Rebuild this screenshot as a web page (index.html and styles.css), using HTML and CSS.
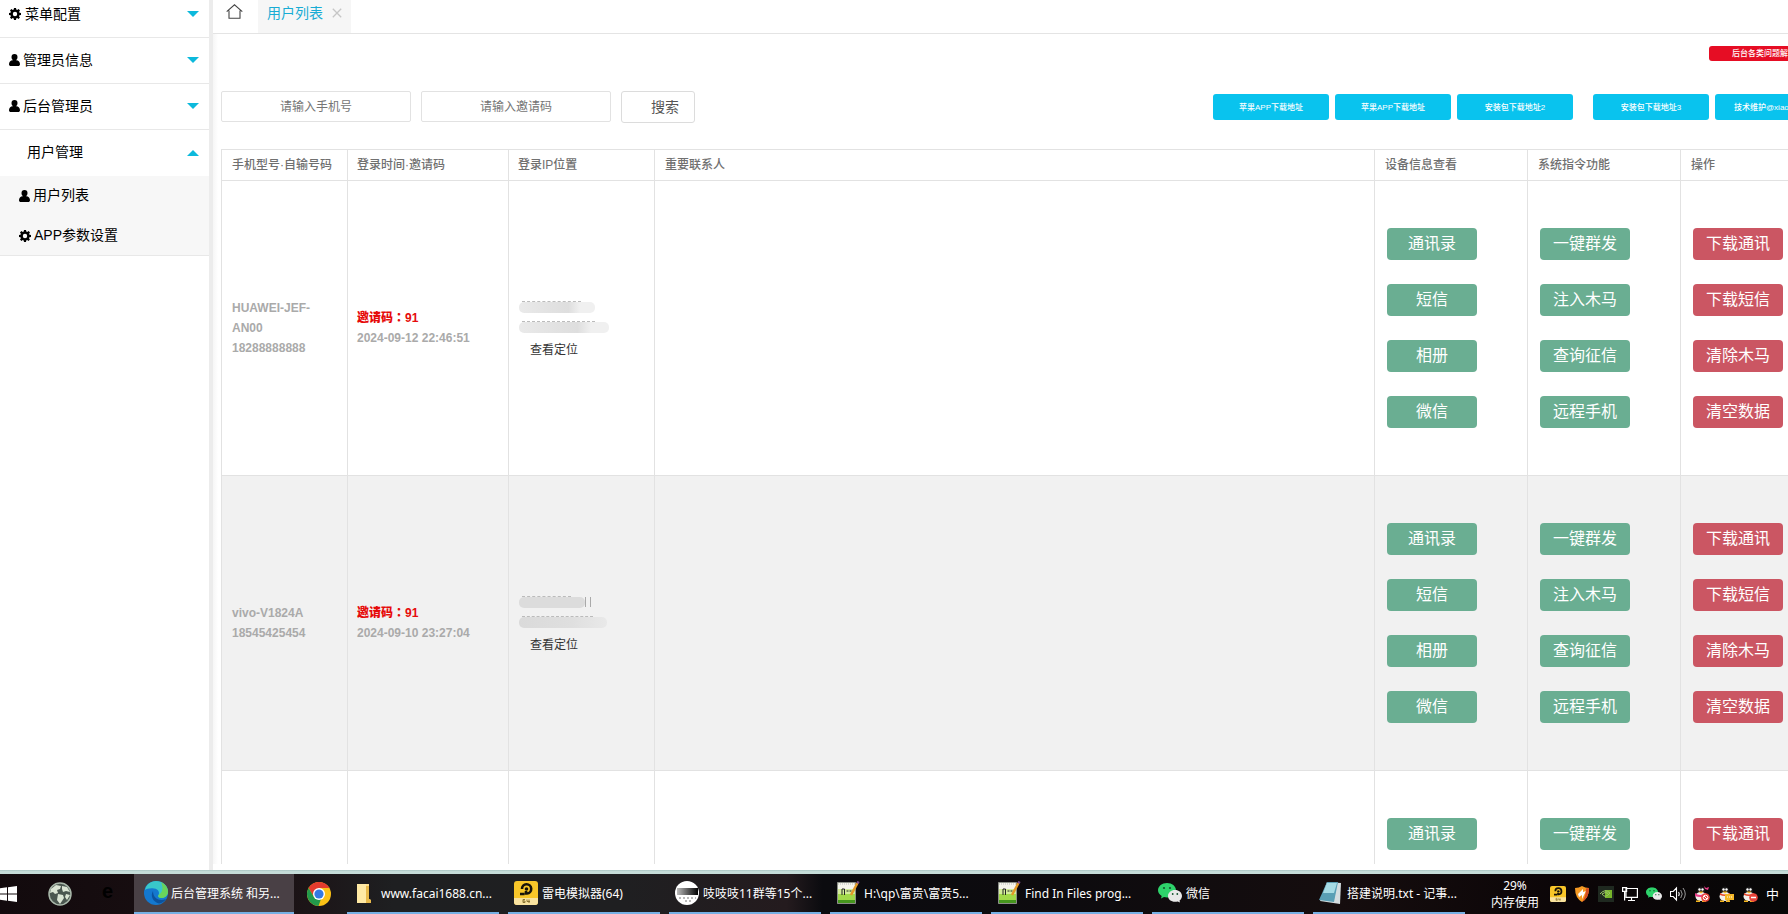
FILE: index.html
```html
<!DOCTYPE html>
<html lang="zh-CN">
<head>
<meta charset="utf-8">
<title>后台管理系统</title>
<link rel="stylesheet" href="styles.css">
</head>
<body>
<svg class="defs" width="0" height="0">
  <symbol id="gear" viewBox="0 0 12 12"><path fill-rule="evenodd" d="M5 0h2l.3 1.6.9.4 1.4-.9 1.4 1.4-.9 1.3.4 1L12 5v2l-1.600.3-.4.9.9 1.400-1.400 1.400-1.300-.9-1 .4L7 12H5l-.3-1.500-1-.4-1.300.9L1 9.600l.9-1.400-.4-.9L0 7V5l1.500-.3.4-1L1 2.400 2.400 1l1.400.9.9-.4zM6 3.800a2.200 2.200 0 1 0 0 4.400 2.200 2.200 0 0 0 0-4.400z"/></symbol>
  <symbol id="user" viewBox="0 0 11 12"><path d="M5.500 0a3 3 0 0 1 3 3.100c0 1.500-.6 2.600-1.400 3.100 2.600 0 3.900 1.700 3.900 4 0 1.100-.8 1.800-1.800 1.800H1.800C.8 12 0 11.300 0 10.200c0-2.300 1.300-4 3.900-4-.8-.5-1.400-1.600-1.400-3.100a3 3 0 0 1 3-3.100z"/></symbol>
  <symbol id="notepp" viewBox="0 0 24 24"><path fill="#f6f6ec" stroke="#8a8f86" d="M1.500 1.500h18v21h-18z"/><path fill="#d3ec9a" d="M2 8h17v6H2z"/><path fill="#a2d94a" d="M2 13h17v9H2z"/><path fill="#45961d" d="M2 19h17v3H2z"/><path stroke="#bbb" stroke-dasharray="1 1" d="M2 3h17"/><path fill="none" stroke="#222" stroke-width="1" d="M6 14V8h2.500v6M10.500 10h2m1 0h2"/><path stroke="#e39a27" stroke-width="2.500" d="M21.500 2 15 14"/><path stroke="#7a4a87" stroke-width="2.500" d="m22.500.5-1 1.800"/></symbol>
  <symbol id="wechat" viewBox="0 0 24 20"><path fill="#2ed36b" d="M9 0c5 0 9 3.200 9 7.300 0 4-4 7.200-9 7.200-1 0-2-.2-3-.5L3 15.500l.7-2.500C1.500 11.700 0 9.600 0 7.300 0 3.200 4 0 9 0z"/><path fill="#e9e9e9" d="M17 7c4 0 7 2.600 7 6 0 1.900-1 3.500-2.500 4.500l.5 2-2.300-1.100c-.9.3-1.800.4-2.700.4-4 0-7-2.500-7-5.800s3-6 7-6z"/><g fill="#17552f"><circle cx="6" cy="5" r="1.100"/><circle cx="12" cy="5" r="1.100"/><circle cx="14.700" cy="11" r=".9"/><circle cx="19.300" cy="11" r=".9"/></g></symbol>
  <symbol id="ld" viewBox="0 0 24 24"><rect width="24" height="24" rx="3" fill="#f8c629"/><path fill="#f9e3a0" d="M0 17h24v4a3 3 0 0 1-3 3H3a3 3 0 0 1-3-3z"/><path fill="none" stroke="#17130a" stroke-width="2.600" d="M12 10v2.500h1a4.600 4.600 0 1 0-5-4.500M6 13h4.500"/><circle cx="12.500" cy="8" r="1.800" fill="#17130a"/><path fill="none" stroke="#8a7433" d="M11 18.500H9v3h2V20H9M13 18.500v2h3m-1-2V22"/></symbol>
  <symbol id="qq" viewBox="0 0 16 16"><ellipse cx="7" cy="5" rx="4" ry="4.500" fill="#181818"/><ellipse cx="7" cy="10.500" rx="5.500" ry="4.500" fill="#f3f0ec"/><circle cx="5.500" cy="3.500" r="1.200" fill="#fff"/><circle cx="8.500" cy="3.500" r="1.200" fill="#fff"/><path fill="#f5b61c" d="M4.500 5.500h5L7 7.500zM2 14.500h4v1.500H2zM8 14.500h4v1.500H8z"/></symbol>
</svg>
<div class="desktop">
  <div class="browser">
    <nav class="sidebar">
      <div class="menu"><svg class="mi"><use href="#gear"/></svg><span>菜单配置</span><i class="caret"></i></div>
      <div class="menu"><svg class="mi u"><use href="#user"/></svg><span>管理员信息</span><i class="caret"></i></div>
      <div class="menu"><svg class="mi u"><use href="#user"/></svg><span>后台管理员</span><i class="caret"></i></div>
      <div class="menu open"><span>用户管理</span><i class="caret up"></i></div>
      <div class="submenu">
        <div class="sub"><svg class="mi u"><use href="#user"/></svg><span>用户列表</span></div>
        <div class="sub"><svg class="mi"><use href="#gear"/></svg><span>APP参数设置</span></div>
      </div>
    </nav>
    <main class="main">
      <div class="tabs">
        <svg class="home" viewBox="0 0 17 15"><path d="M.7 7.600 8.500.8l7.800 6.800M3 6.500v7.800h11V6.500"/></svg>
        <div class="tab"><span>用户列表</span><svg class="close" viewBox="0 0 10 10"><path d="m.8.8 8.400 8.400M9.200.8.800 9.200"/></svg></div>
      </div>
      <div class="notice"><span class="red-btn">后台各类问题解</span></div>
      <div class="toolbar">
        <div class="input">请输入手机号</div>
        <div class="input">请输入邀请码</div>
        <div class="search">搜索</div>
        <div class="links">
          <span class="link">苹果APP下载地址</span>
          <span class="link">苹果APP下载地址</span>
          <span class="link wide">安装包下载地址2</span>
          <span class="link">安装包下载地址3</span>
          <span class="link tech">技术维护@xiao</span>
        </div>
      </div>
      <div class="table">
        <div class="row head">
          <div>手机型号·自输号码</div><div>登录时间·邀请码</div><div>登录IP位置</div><div>重要联系人</div><div>设备信息查看</div><div>系统指令功能</div><div>操作</div>
        </div>
        <div class="row">
          <div class="txt">HUAWEI-JEF-<br>AN00<br>18288888888</div>
          <div class="txt"><b>邀请码<span class="colon" lang="zh-TW">：</span>91</b><br>2024-09-12 22:46:51</div>
          <div class="txt"><span class="mask a"></span><span class="mask b"></span><span class="loc">查看定位</span></div>
          <div></div>
          <div class="acts"><span>通讯录</span><span>短信</span><span>相册</span><span>微信</span></div>
          <div class="acts"><span>一键群发</span><span>注入木马</span><span>查询征信</span><span>远程手机</span></div>
          <div class="acts danger"><span>下载通讯</span><span>下载短信</span><span>清除木马</span><span>清空数据</span></div>
        </div>
        <div class="row even">
          <div class="txt">vivo-V1824A<br>18545425454</div>
          <div class="txt"><b>邀请码<span class="colon" lang="zh-TW">：</span>91</b><br>2024-09-10 23:27:04</div>
          <div class="txt"><span class="mask c"></span><span class="mask d"></span><span class="loc">查看定位</span></div>
          <div></div>
          <div class="acts"><span>通讯录</span><span>短信</span><span>相册</span><span>微信</span></div>
          <div class="acts"><span>一键群发</span><span>注入木马</span><span>查询征信</span><span>远程手机</span></div>
          <div class="acts danger"><span>下载通讯</span><span>下载短信</span><span>清除木马</span><span>清空数据</span></div>
        </div>
        <div class="row last">
          <div></div><div></div><div></div><div></div>
          <div class="acts"><span>通讯录</span></div>
          <div class="acts"><span>一键群发</span></div>
          <div class="acts danger"><span>下载通讯</span></div>
        </div>
      </div>
    </main>
  </div>
  <div class="edge"></div>
  <footer class="taskbar">
    <svg class="win" viewBox="0 0 17 16"><path fill="#fff" d="M0 2.300 7 1.300v6.200H0zM8 1.200 17 0v7.500H8zM0 8.500h7v6.200l-7-1zM8 8.500h9V16l-9-1.200z"/></svg>
    <svg class="globe" viewBox="0 0 24 24"><circle cx="12" cy="12" r="11" fill="#4b5750" stroke="#a9b8aa" stroke-width="1.500"/><path fill="#dbe5d4" d="m3 7 5-4 5 1-1 3-3 1 1 3-3 1-2-2-3 1zm11-3 5 1 3 5-4-1-3 1-1-3zm-4 8 5 1 1 3-4 6-3-4zm8 0 4 1-3 5-2-3z"/></svg>
    <span class="dark-e">e</span>
    <div class="task active"><svg viewBox="0 0 24 24"><circle cx="12" cy="12" r="12" fill="#1478cf"/><path fill="#39c7ca" d="M1 9C2 3.500 6.500 0 12 0c7 0 12 5 12 10.500 0 4-3 6.500-6.500 6.500-3 0-4-1.500-3-3 1.200-1.700.5-6-4.500-6.500C5.500 7 2.500 8 1 9z"/><path fill="#69d45b" d="M17 1.200c4.300 2 7 5.500 7 9.300 0 4-3 6.500-6.500 6.500-3 0-4-1.500-3-3C18 12 20 7 17 1.200z"/><path fill="#0c529d" d="M9 10c-3 5 0 11 6 12.500 3-.3 5.500-2 7-4.500-6 2.500-13 0-13-8z"/></svg><span>后台管理系统 和另...</span></div>
    <svg class="chrome" viewBox="0 0 24 24"><circle cx="12" cy="12" r="12" fill="#fbc116"/><path fill="#e33b2e" d="M1.600 6A12 12 0 0 1 22.400 6H12L7 15z"/><path fill="#229a4b" d="M1.600 6 7 15l7 2-2.500 7A12 12 0 0 1 1.600 6z"/><circle cx="12" cy="12" r="6" fill="#fff"/><circle cx="12" cy="12" r="4.600" fill="#3479e2"/></svg>
    <div class="apps">
      <div class="task"><svg viewBox="0 0 24 24"><path fill="#ffe08c" d="M4 3h12v15l2 1v3H4z"/><path fill="#e8b94a" d="M13 5h3v13l2 1v3h-5z"/><path fill="#fff0b8" d="M4 3h9v19H4z" opacity=".55"/></svg><span>www.facai1688.cn...</span></div>
      <div class="task"><svg viewBox="0 0 24 24"><use href="#ld"/></svg><span>雷电模拟器(64)</span></div>
      <div class="task"><svg viewBox="0 0 24 24"><defs><linearGradient id="g"><stop stop-color="#bbb"/><stop offset="1" stop-color="#000"/></linearGradient></defs><circle cx="12" cy="12" r="12" fill="#fff"/><path fill="url(#g)" d="M2 7h21v7H2z"/><path stroke="#777" stroke-dasharray="2 2" d="M4 17h17M10 20h6"/></svg><span>吱吱吱11群等15个...</span></div>
      <div class="task"><svg viewBox="0 0 24 24"><use href="#notepp"/></svg><span>H:\qp\富贵\富贵5...</span></div>
      <div class="task"><svg viewBox="0 0 24 24"><use href="#notepp"/></svg><span>Find In Files prog...</span></div>
      <div class="task"><svg viewBox="0 -2 24 24"><use href="#wechat" width="24" height="20"/></svg><span>微信</span></div>
      <div class="task"><svg viewBox="0 0 24 24"><path fill="#d4dde0" d="m8 1 14 1-1 21-20-3z"/><path fill="#5a9fb5" d="M8 1h11l-4 20L0 19z"/><path fill="#a6dbe5" d="M8 2h10l-3 10H4z"/></svg><span>搭建说明.txt - 记事...</span></div>
    </div>
    <div class="mem">29%<br>内存使用</div>
    <div class="tray">
      <svg viewBox="0 0 24 24"><use href="#ld"/></svg>
      <svg viewBox="0 0 16 16"><path fill="#f59a23" d="M1 2q4 0 7-2 3 2 7 2 0 10-7 14Q1 12 1 2z"/><path fill="#fff" d="m4 8 5-5v3l3-1-4 8V9l-3 2z"/><path fill="#d64b23" d="M12 2.500 15 2q0 10-7 14 4-5 4-13.500z"/></svg>
      <svg viewBox="0 0 16 16"><path fill="#1f2920" d="M0 0h16v16H0z"/><path fill="#77b52a" d="M7 4h7v8H7z"/><path fill="none" stroke="#9cc46a" d="M2 8q5-6 10-1-5 6-8 1 4-3 6-.5"/></svg>
      <svg viewBox="0 0 16 16"><path fill="none" stroke="#fff" stroke-width="1.200" d="M4 2.500h11.400v8.800H4zM9.500 11v3.500M6 14.500h7M.6 1.600h4v3.800h-4zM2.600 5.500v9"/></svg>
      <svg viewBox="0 -2 24 24"><use href="#wechat" width="24" height="20"/></svg>
      <svg viewBox="0 0 16 16"><path fill="none" stroke="#fff" stroke-width="1.100" d="M.5 5.500h2.700L6.500 2v12L3.200 10.500H.5zM8.500 6q1.400 2 0 4"/><path fill="none" stroke="#999" d="M10.700 4q3 4 0 8M13 2q4.500 6 0 12"/></svg>
      <svg viewBox="0 0 16 16"><use href="#qq"/><path fill="#ea3d87" d="M1 7q5 4 11 0v3q-6 2-11 0zM10 0l2 2 3-1-1 3-3-1z"/><circle cx="11.500" cy="11.500" r="4.300" fill="#e8443a"/><circle cx="11.500" cy="11.500" r="2.300" fill="none" stroke="#fff"/><path stroke="#fff" d="m10 10 3 3"/></svg>
      <svg viewBox="0 0 16 16"><use href="#qq"/><path fill="#e44326" d="M2 7q5 3 10 0v2q-5 2-10 0z"/><path fill="#f5b829" d="M7 8h9v6h-4l-2 2v-2H7z"/><path stroke="#fff" stroke-dasharray="1 1" d="M9 11h5"/></svg>
      <svg viewBox="0 0 16 16"><use href="#qq"/><path fill="#e44326" d="M2 7q5 3 10 0v2q-5 2-10 0z"/><circle cx="11.500" cy="11.500" r="4.300" fill="#e8443a"/><path stroke="#fff" stroke-width="1.500" d="M9 11.500h5"/></svg>
      <span class="ime">中</span>
    </div>
  </footer>
</div>
</body>
</html>
```
FILE: styles.css
```css
* { box-sizing: border-box; }
body { margin: 0; overflow: hidden; background: #fff; font-family: "Liberation Sans", "Noto Sans CJK SC", sans-serif; }
.defs { display: block; height: 0; }
.desktop { width: 1788px; height: 914px; display: flex; flex-direction: column; overflow: hidden; }
.browser { height: 870px; display: flex; overflow: hidden; }

.sidebar { width: 213px; flex: none; border-right: 4px solid #ececec; font-size: 14px; color: #000; }
.menu { height: 46px; display: flex; align-items: center; padding: 0 10px 1px 9px; border-bottom: 1px solid #e8e8e8; }
.menu:first-child { height: 38px; padding-bottom: 9px; }
.menu.open { border: 0; padding-left: 27px; }
.mi { width: 12px; height: 12px; margin-right: 4px; flex: none; }
.mi.u { width: 11px; margin-right: 3px; }
.menu span, .sub span { line-height: 20px; }
.menu:not(:first-child) span, .sub span { padding-bottom: 1px; }
.caret { margin-left: auto; border: 6px solid transparent; border-top-color: #0cb9dc; border-bottom: 0; }
.caret.up { border-bottom: 6px solid #0cb9dc; border-top: 0; }
.submenu { height: 80px; background: #f7f7f7; border-bottom: 1px solid #e8e8e8; }
.sub { height: 40px; display: flex; align-items: center; padding: 0 0 1px 19px; }
.sub .mi { margin-right: 3px; }

.main { flex: 1; min-width: 0; height: 864px; overflow: hidden; padding-left: 8px; background: linear-gradient(90deg, #f6f6f6, #fff 5px); }
.tabs { height: 34px; margin-left: -8px; border-bottom: 1px solid #e4e4e4; display: flex; background: #fff; }
.home { width: 17px; height: 15px; margin: 4px 15px 0 13px; fill: none; stroke: #444; stroke-width: 1.100; }
.tab { width: 93px; background: #f6f6f6; display: flex; align-items: center; padding: 0 9px 7px; font-size: 14px; color: #18acd4; }
.tab span { padding-bottom: 2px; }
.close { width: 10px; height: 10px; margin-left: 9px; stroke: #c6c6c6; stroke-width: 1.300; }
.notice { height: 57px; padding-top: 12px; display: flex; margin-left: 1488px; }
.red-btn { width: 116px; height: 15px; flex: none; padding-left: 23px; border-radius: 3px; background: #e60d24; color: #fff; font-size: 8px; font-weight: 500; line-height: 16px; white-space: nowrap; }
.toolbar { height: 58px; display: flex; align-items: flex-start; gap: 10px; white-space: nowrap; }
.input { width: 190px; height: 31px; flex: none; border: 1px solid #e2e2e2; border-radius: 2px; font-size: 12px; line-height: 30px; text-align: center; color: #757575; }
.search { width: 74px; height: 32px; flex: none; border: 1px solid #dcdcdc; border-radius: 3px; padding-left: 29px; font-size: 14px; line-height: 30px; color: #555; }
.links { display: flex; gap: 6px; margin: 3px 0 0 508px; }
.link { width: 116px; height: 26px; flex: none; border-radius: 3px; background: #09c3ee; color: #fff; font-size: 8px; font-weight: 500; line-height: 28px; text-align: center; }
.link.wide { margin-right: 14px; }
.link.tech { padding-left: 19px; text-align: left; }

.table { width: 1640px; border-top: 1px solid #e2e2e2; font-size: 12px; }
.row { display: grid; grid-template-columns: 126px 161px 146px 720px 153px 153px 181px; height: 295px; border-bottom: 1px solid #e2e2e2; background: #fff; }
.row > div { border-left: 1px solid #e2e2e2; padding-left: 10px; }
.row > div:nth-child(2), .row > div:nth-child(3) { padding-left: 9px; }
.row.head { height: 31px; font-weight: 500; line-height: 30px; color: #707070; }
.row.even { background: #f1f1f1; }
.txt { display: flow-root; align-content: center; line-height: 20px; font-weight: bold; color: #aaa; }
.txt b { color: #e60b0b; }
.colon { font-family: "Noto Sans CJK TC", sans-serif; line-height: 1; }
.loc { display: block; margin-top: -2px; padding-left: 12px; font-weight: normal; color: #333; }
.mask { display: block; height: 11px; margin: 5px 0 9px 1px; border-radius: 5px; background: linear-gradient(90deg, #eaeaea, #e2e2e2 40%, #dedede 65%, #f0f0f0 80%); position: relative; }
.mask::before { content: ""; position: absolute; left: 3px; right: 14px; top: -1px; border-top: 1px dashed #bbb; }
.mask.a { width: 76px; }
.mask.b { width: 90px; }
.mask.c { width: 66px; background: #dcdcdc; }
.mask.c::after { content: ""; position: absolute; left: 66px; top: 0; width: 4px; height: 10px; border: solid #aaa; border-width: 0 1px; }
.mask.d { width: 88px; background: linear-gradient(90deg, #dadada, #dfdfdf 60%, #e9e9e9); }
.mask.a, .mask.c { margin-top: 6px; }
.row > .acts { display: flex; flex-direction: column; gap: 24px; padding: 47px 0 0 12px; }
.acts span { width: 90px; height: 32px; border-radius: 4px; background: #6aae92; color: #fff; font-size: 16px; line-height: 31px; text-align: center; }
.acts.danger span { background: #cb5663; }

.edge { height: 4px; flex: none; background: linear-gradient(#a9c4c2, #c5dcd8 40%); }
.taskbar { height: 40px; flex: none; display: flex; background: linear-gradient(90deg, #120a0d, #1b1013 15%, #1e1f21 22%, #1f1f21 35%, #241b1e 44%, #0b0b0f 46%, #0d0b0e 60%, #150d0e 75%, #0b0507 88%, #070707); color: #fff; font: 12px/18px "Noto Sans", "Noto Sans CJK SC", sans-serif; white-space: nowrap; }
.win { width: 17px; height: 16px; margin-top: 12px; }
.globe { width: 24px; height: 24px; margin: 8px 0 0 31px; }
.dark-e { width: 62px; padding: 7px 0 0 30px; font: bold 20px/20px "Liberation Sans", sans-serif; color: #000; }
.task { width: 152px; height: 40px; flex: none; display: flex; align-items: center; padding-left: 6px; border-bottom: 2px solid #76b0e4; }
.task svg { width: 24px; height: 24px; flex: none; margin-right: 4px; }
.task span { padding-top: 2px; }
.task.active { width: 160px; padding-left: 10px; background: #494045; }
.task.active svg { margin-right: 3px; }
.chrome { width: 24px; height: 24px; margin: 8px 17px 0 13px; }
.apps { display: flex; gap: 9px; margin-left: -1px; }
.mem { width: 60px; margin-left: 20px; padding-top: 3px; line-height: 17px; text-align: center; }
.tray { display: flex; gap: 8px; margin-left: 5px; padding-top: 12px; }
.tray svg { width: 16px; height: 16px; flex: none; }
.ime { font-size: 13px; line-height: 16px; }
```
